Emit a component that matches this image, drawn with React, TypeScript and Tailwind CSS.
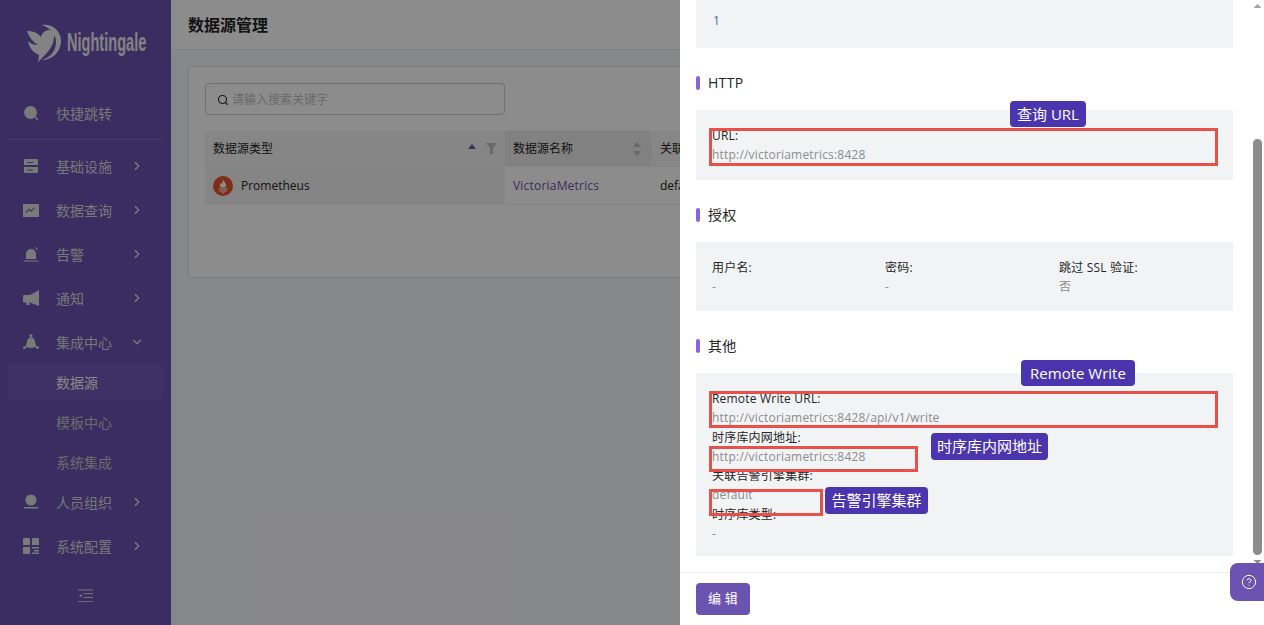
import { ChevronRight, ChevronDown, Search, CircleHelp } from "lucide-react";

const font = "font-['Open_Sans','Noto_Sans_CJK_SC',sans-serif]";

const IconSearch = () => (
  <svg viewBox="0 0 16 16" className="h-4 w-4" fill="currentColor">
    <circle cx="7.5" cy="7.5" r="6.5" />
    <path d="M12 12l3 3" stroke="currentColor" strokeWidth="1.5" />
  </svg>
);
const IconServer = () => (
  <svg viewBox="0 0 16 16" className="h-4 w-4" fill="currentColor">
    <path fillRule="evenodd" d="M2 1h12a1 1 0 011 1v5H1V2a1 1 0 011-1zm2 3v1h6V4zM1 9h14v5a1 1 0 01-1 1H2a1 1 0 01-1-1zm3 2.500v1h6v-1z" />
  </svg>
);
const IconChart = () => (
  <svg viewBox="0 0 16 16" className="h-4 w-4" fill="currentColor">
    <path fillRule="evenodd" d="M0 2h16v13H0zm3 9l3-3 2 2 4-4-.8-.8L8 8.400l-2-2-3.800 3.800z" />
  </svg>
);
const IconAlarm = () => (
  <svg viewBox="0 0 16 16" className="h-4 w-4" fill="currentColor">
    <path d="M3 13V8a5 5 0 0110 0v5zM0.500 14.500h15v1H.5zM12 1l3 2.500-.6.700-3-2.500z" />
  </svg>
);
const IconBell = () => (
  <svg viewBox="0 0 16 16" className="h-4 w-4" fill="currentColor">
    <path d="M16 0v16L7 12.500H6l1 2.500H4l-1-2.500H1a1 1 0 01-1-1V6a1 1 0 011-1h6z" />
  </svg>
);
const IconHub = () => (
  <svg viewBox="0 0 16 16" className="h-4 w-4" fill="currentColor">
    <circle cx="8" cy="1.500" r="1.500" />
    <circle cx="1.500" cy="13.500" r="1.500" />
    <circle cx="14.500" cy="13.500" r="1.500" />
    <path d="M7.500 2h1v2h-1zM8 3.500c2.500 0 4 2 4 4.500l1.500 5-5.500 1-5.500-1L4 8c0-2.500 1.500-4.500 4-4.500z" />
  </svg>
);
const IconUser = () => (
  <svg viewBox="0 0 16 16" className="h-4 w-4" fill="currentColor">
    <circle cx="8" cy="6" r="5.500" />
    <path d="M1 13h14v1.500H1z" />
  </svg>
);
const IconGrid = () => (
  <svg viewBox="0 0 16 16" className="h-4 w-4" fill="currentColor">
    <path d="M1 0h5a1 1 0 011 1v6H0V1a1 1 0 011-1zM9 0h6a1 1 0 011 1v6H9zM0 9h7v6a1 1 0 01-1 1H1a1 1 0 01-1-1zM9 9h7v1.500H9zM11 12h5v1.500h-5zM9 14.500h7V16H9z" />
  </svg>
);

const navTop = [
  { label: "基础设施", icon: <IconServer /> },
  { label: "数据查询", icon: <IconChart /> },
  { label: "告警", icon: <IconAlarm /> },
  { label: "通知", icon: <IconBell /> },
];

const NavItem = ({ label, icon, open, noArrow }: { label: string; icon: React.ReactNode; open?: boolean; noArrow?: boolean }) => (
  <div className="flex h-11 items-center pl-[23px] text-[14px] text-[#d9d9d9]">
    <span className="flex w-[33px] text-[#dfdfdf]">{icon}</span>
    <span className="w-[74px]">{label}</span>
    {!noArrow && (open ? <ChevronDown size={14} strokeWidth={2} className="text-[#e4e4e4]" /> : <ChevronRight size={14} strokeWidth={2} className="text-[#e4e4e4]" />)}
  </div>
);

const Field = ({ label, value }: { label: string; value: string }) => (
  <div>
    <div className="text-[#262626]">{label}</div>
    <div className="text-[#8c8c8c]">{value}</div>
  </div>
);

const Section = ({ title, className }: { title: string; className: string }) => (
  <div className={`flex h-5 items-center gap-2 text-[14px] tracking-[0.3px] text-[#262626] ${className}`}>
    <span className="h-[14px] w-1 rounded-sm bg-[#8a63db]" />
    {title}
  </div>
);

const Note = ({ text, className }: { text: string; className: string }) => (
  <div className={`absolute flex h-[26px] items-center justify-center rounded bg-[#4a35ae] text-[15px] text-white ${className}`}>{text}</div>
);

const Box = ({ className }: { className: string }) => (
  <div className={`absolute border-[3px] border-[#e8504a] ${className}`} />
);

export default function App() {
  return (
    <div className={`relative flex h-[625px] w-[1264px] overflow-hidden bg-[#f5f6fa] ${font}`}>
      {/* Sidebar */}
      <aside className="flex w-[171px] shrink-0 flex-col bg-[#6c53b1]">
        <div className="flex h-[91px] items-center pb-[6px] pl-[26px] text-[#eeeeee]">
          <svg viewBox="0 0 36 38" className="h-[38px] w-[36px] shrink-0" fill="currentColor">
            <path d="M16 1c9-2 19 5 19 16 0 11-9 19-19 19 7-2 14-8 14-18 0-8-6-14-14-17z" />
            <path d="M1 7c6 0 11 2 14 6 1-4 4-7 8-7 2 0 4 1 5 3l3 1-3 2c0 9-5 15-10 20l-6 6 1-7C8 29 3 24 2 17c3 3 6 4 10 4C7 18 3 13 1 7z" />
          </svg>
          <span className="ml-[5px] origin-left scale-x-[0.56] whitespace-nowrap font-['Liberation_Sans',sans-serif] text-[26px] font-bold">Nightingale</span>
        </div>
        <NavItem label="快捷跳转" icon={<IconSearch />} noArrow />
        <div className="mx-2 mt-1 mb-1 h-px bg-[#7d66bd]" />
        {navTop.map((n) => (
          <NavItem key={n.label} label={n.label} icon={n.icon} />
        ))}
        <NavItem label="集成中心" icon={<IconHub />} open />
        <div className="flex flex-col gap-1 text-[14px]">
          <div className="mx-2 flex h-9 items-center rounded bg-[#7459b9] pl-12 text-[#f5f5f5]">数据源</div>
          <div className="flex h-9 items-center pl-14 text-[#c4c4c4]">模板中心</div>
          <div className="flex h-9 items-center pl-14 text-[#c4c4c4]">系统集成</div>
        </div>
        <NavItem label="人员组织" icon={<IconUser />} />
        <NavItem label="系统配置" icon={<IconGrid />} />
        <div className="flex h-14 items-center justify-center text-[#dddddd]">
          <svg viewBox="0 0 16 14" className="h-[14px] w-[15px]" fill="currentColor">
            <path d="M0 0h16v1H0zM6 4h10v1H6zM6 8h10v1H6zM0 12.500h16v1H0zM4 4.500v4L1 6.500z" />
          </svg>
        </div>
      </aside>

      {/* Main */}
      <main className="min-w-0 flex-1">
        <header className="flex h-[50px] items-center border-b border-[#e3e5ea] bg-white pl-[17px] text-[16px] font-semibold text-[#262626]">数据源管理</header>
        <section className="mt-4 ml-[17px] h-[212px] border border-[#e3e5ea] bg-white pt-4 pl-4">
          <div className="flex h-8 w-[300px] items-center gap-[3px] rounded-sm border border-[#c9ccd3] pt-px pl-[11px] text-[12px] text-[#bfbfbf]">
            <Search size={12} className="text-[#262626]" strokeWidth={2.2} />
            请输入搜索关键字
          </div>
          <div className="mt-4 grid grid-cols-[300px_145px_1fr] text-[12px] text-[#262626]">
            <div className="flex h-9 items-center justify-between border-b border-[#f0f0f0] bg-[#f5f5f5] pr-2 pl-2">
              数据源类型
              <span className="flex items-center gap-[10px]">
                <svg viewBox="0 0 8 5" className="h-[5px] w-2 -translate-y-[2px] fill-[#6c53b1]"><path d="M4 0l4 5H0z" /></svg>
                <svg viewBox="0 0 10 10" className="h-[11px] w-[11px] fill-[#bfbfbf]"><path d="M0 0h10L6.500 4.500V10h-3V4.500z" /></svg>
              </span>
            </div>
            <div className="flex h-9 items-center justify-between border-r-0 border-b border-[#f0f0f0] bg-[#ececec] pr-[9px] pl-2">
              数据源名称
              <svg viewBox="0 0 8 14" className="h-[14px] w-2 fill-[#bfbfbf]"><path d="M4 0l4 5H0zM4 14L0 9h8z" /></svg>
            </div>
            <div className="flex h-9 items-center border-b border-[#f0f0f0] bg-[#f5f5f5]">
              <span className="h-[19px] w-px bg-[#e3e3e3]" />
              <span className="pl-[9px]">关联</span>
            </div>
            <div className="flex h-[38px] items-center gap-2 border-b border-[#f0f0f0] bg-[#f2f2f2] pl-2">
              <svg viewBox="0 0 20 20" className="h-5 w-5">
                <circle cx="10" cy="10" r="10" fill="#e6522c" />
                <path fill="#fff" d="M10 3c0 2 3 3 3 6.500 0 1-.3 1.500-.7 2H7.700C7.300 11 7 10.500 7 9.500c0-1.500 1-2 1.300-3 .4.500.5 1 .7 1.500C9.700 6.500 10 5 10 3zM5.500 12.500h9v1h-9zM6.500 14.500h7v1h-7zM8 16.500h4c-.5.700-1.200 1-2 1s-1.500-.3-2-1z" />
              </svg>
              Prometheus
            </div>
            <div className="flex h-[38px] items-center border-b border-[#f0f0f0] pl-2 tracking-[0.2px] text-[#6c53b1]">VictoriaMetrics</div>
            <div className="flex h-[38px] items-center border-b border-[#f0f0f0] pl-[10px]">default</div>
          </div>
        </section>
      </main>

      {/* Mask */}
      <div className="absolute inset-0 bg-black/45" />

      {/* Drawer */}
      <div className="absolute top-0 right-0 bottom-0 flex w-[584px] flex-col bg-white text-[12px] leading-[19.3px] tracking-[0.2px]">
        <div className="flex-1 pr-[31px] pl-4">
          <div className="h-[48px] bg-[#f2f3f5] pt-[11px] pl-[17px] text-[#2f6fa8]">1</div>
          <Section title="HTTP" className="mt-6 translate-y-px" />
          <div className="mt-[18px] h-[70px] bg-[#f2f3f5] px-4 pt-4">
            <Field label="URL:" value="http://victoriametrics:8428" />
          </div>
          <Section title="授权" className="mt-[25px]" />
          <div className="mt-[17px] grid h-[69px] grid-cols-[173px_174px_1fr] bg-[#f2f3f5] px-4 pt-4">
            <Field label="用户名:" value="-" />
            <Field label="密码:" value="-" />
            <Field label="跳过 SSL 验证:" value="否" />
          </div>
          <Section title="其他" className="mt-[25px]" />
          <div className="mt-[17px] h-[183px] bg-[#f2f3f5] px-4 pt-4">
            <Field label="Remote Write URL:" value="http://victoriametrics:8428/api/v1/write" />
            <Field label="时序库内网地址:" value="http://victoriametrics:8428" />
            <Field label="关联告警引擎集群:" value="default" />
            <Field label="时序库类型:" value="-" />
          </div>
        </div>
        <div className="h-[53px] border-t border-[#eeeeee] pt-[10px] pl-4">
          <button className="h-8 w-[54px] rounded-sm bg-[#6c53b1] text-[13px] text-white">编 辑</button>
        </div>
      </div>

      {/* Scrollbar */}
      <div className="absolute top-[139px] right-[2px] h-[416px] w-[9px] rounded-full bg-[#8c8c8c]" />
      <svg viewBox="0 0 8 4" className="absolute top-[4px] right-[2px] h-[4px] w-[9px] fill-[#a3a3a3]"><path d="M4 0l4 4H0z" /></svg>
      <svg viewBox="0 0 8 4" className="absolute top-[560px] right-[2px] h-[4px] w-[9px] fill-[#8c8c8c]"><path d="M0 0h8L4 4z" /></svg>

      {/* Help */}
      <div className="absolute top-[563px] right-0 flex h-[38px] w-[34px] items-center justify-center rounded-l-lg bg-[#6c53b1] pl-[3px] text-white">
        <CircleHelp size={16} strokeWidth={1.5} />
      </div>

      {/* Annotations */}
      <Box className="top-[128px] left-[709px] h-[38px] w-[509px]" />
      <Box className="top-[391px] left-[709px] h-[37px] w-[509px]" />
      <Box className="top-[446px] left-[709px] h-[26px] w-[209px]" />
      <Box className="top-[489px] left-[709px] h-[27px] w-[114px]" />
      <Note text="查询 URL" className="top-[101px] left-[1010px] w-[76px]" />
      <Note text="Remote Write" className="top-[360px] left-[1021px] w-[114px]" />
      <Note text="时序库内网地址" className="top-[433px] left-[931px] h-[27px] w-[117px]" />
      <Note text="告警引擎集群" className="top-[487px] left-[825px] h-[27px] w-[103px]" />
    </div>
  );
}
